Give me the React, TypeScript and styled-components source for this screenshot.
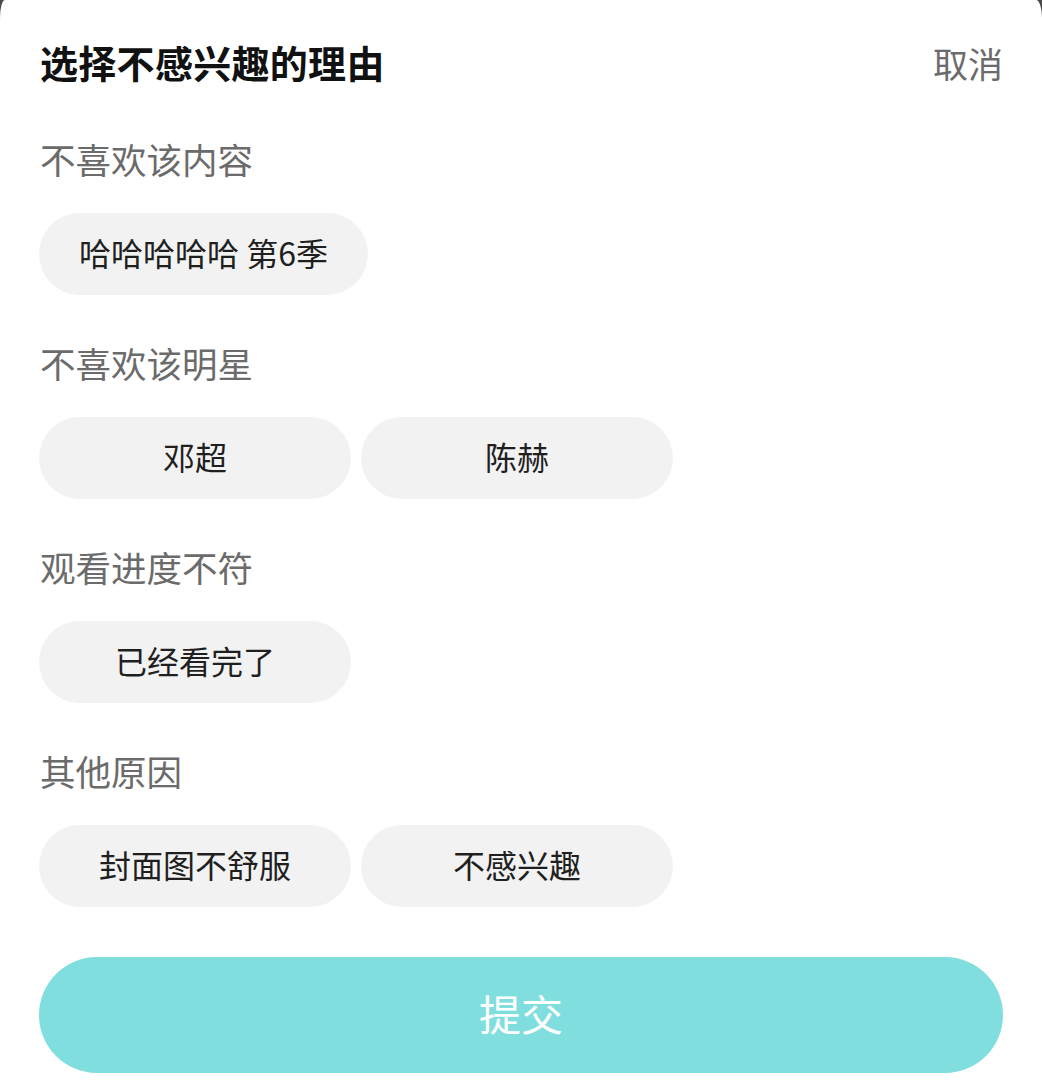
import React from "react";
import styled, { createGlobalStyle } from "styled-components";

const GlobalStyle = createGlobalStyle`
  html, body {
    margin: 0;
    padding: 0;
    background: #4a4a4a;
  }
  body {
    font-family: "Noto Sans CJK SC", "Noto Sans", sans-serif;
  }
  * { box-sizing: border-box; }
`;

const Sheet = styled.div`
  min-height: 100vh;
  background: #ffffff;
  border-top-left-radius: 5px 18px;
  border-top-right-radius: 6px 18px;
  padding: 0 39px 7px 39px;
  display: flex;
  flex-direction: column;
`;

const Header = styled.div`
  height: 130px;
  padding-bottom: 6px;
  display: flex;
  align-items: center;
  justify-content: space-between;
`;

const Title = styled.h1`
  margin: 0 0 0 1px;
  font-size: 38px;
  font-weight: 700;
  color: #111111;
  line-height: 1;
  letter-spacing: 0.3px;
`;

const Cancel = styled.button`
  border: none;
  background: none;
  padding: 0;
  font-family: inherit;
  font-size: 35px;
  color: #6b6b6b;
  line-height: 1;
  cursor: pointer;
`;

const Section = styled.section`
  display: flex;
  flex-direction: column;
  margin-bottom: 39px;
`;

const SectionLabel = styled.div`
  height: 64px;
  padding-bottom: 6px;
  display: flex;
  align-items: center;
  font-size: 35.5px;
  line-height: 1;
  color: #6b6b6b;
  margin-left: 1px;
`;

const ChipRow = styled.div`
  display: flex;
  gap: 10px;
  margin-top: 19px;
`;

const Chip = styled.button`
  height: 82px;
  min-width: 312px;
  padding: 0 40px 4px;
  border: none;
  border-radius: 41px;
  background: #f2f2f2;
  font-family: inherit;
  font-size: 32px;
  line-height: 1;
  color: #1f1f1f;
  display: flex;
  align-items: center;
  justify-content: center;
  white-space: pre;
  cursor: pointer;
`;

const Submit = styled.button`
  margin-top: 11px;
  height: 116px;
  width: 100%;
  padding-bottom: 6px;
  border: none;
  border-radius: 58px;
  background: #80dede;
  color: #ffffff;
  font-family: inherit;
  font-size: 42px;
  line-height: 1;
  display: flex;
  align-items: center;
  justify-content: center;
  cursor: pointer;
`;

const groups: { label: string; options: string[] }[] = [
  { label: "不喜欢该内容", options: ["哈哈哈哈哈 第6季"] },
  { label: "不喜欢该明星", options: ["邓超", "陈赫"] },
  { label: "观看进度不符", options: ["已经看完了"] },
  { label: "其他原因", options: ["封面图不舒服", "不感兴趣"] },
];

export default function App() {
  return (
    <>
      <GlobalStyle />
      <Sheet>
        <Header>
          <Title>选择不感兴趣的理由</Title>
          <Cancel>取消</Cancel>
        </Header>
        {groups.map((g) => (
          <Section key={g.label}>
            <SectionLabel>{g.label}</SectionLabel>
            <ChipRow>
              {g.options.map((o) => (
                <Chip key={o}>{o}</Chip>
              ))}
            </ChipRow>
          </Section>
        ))}
        <Submit>提交</Submit>
      </Sheet>
    </>
  );
}
